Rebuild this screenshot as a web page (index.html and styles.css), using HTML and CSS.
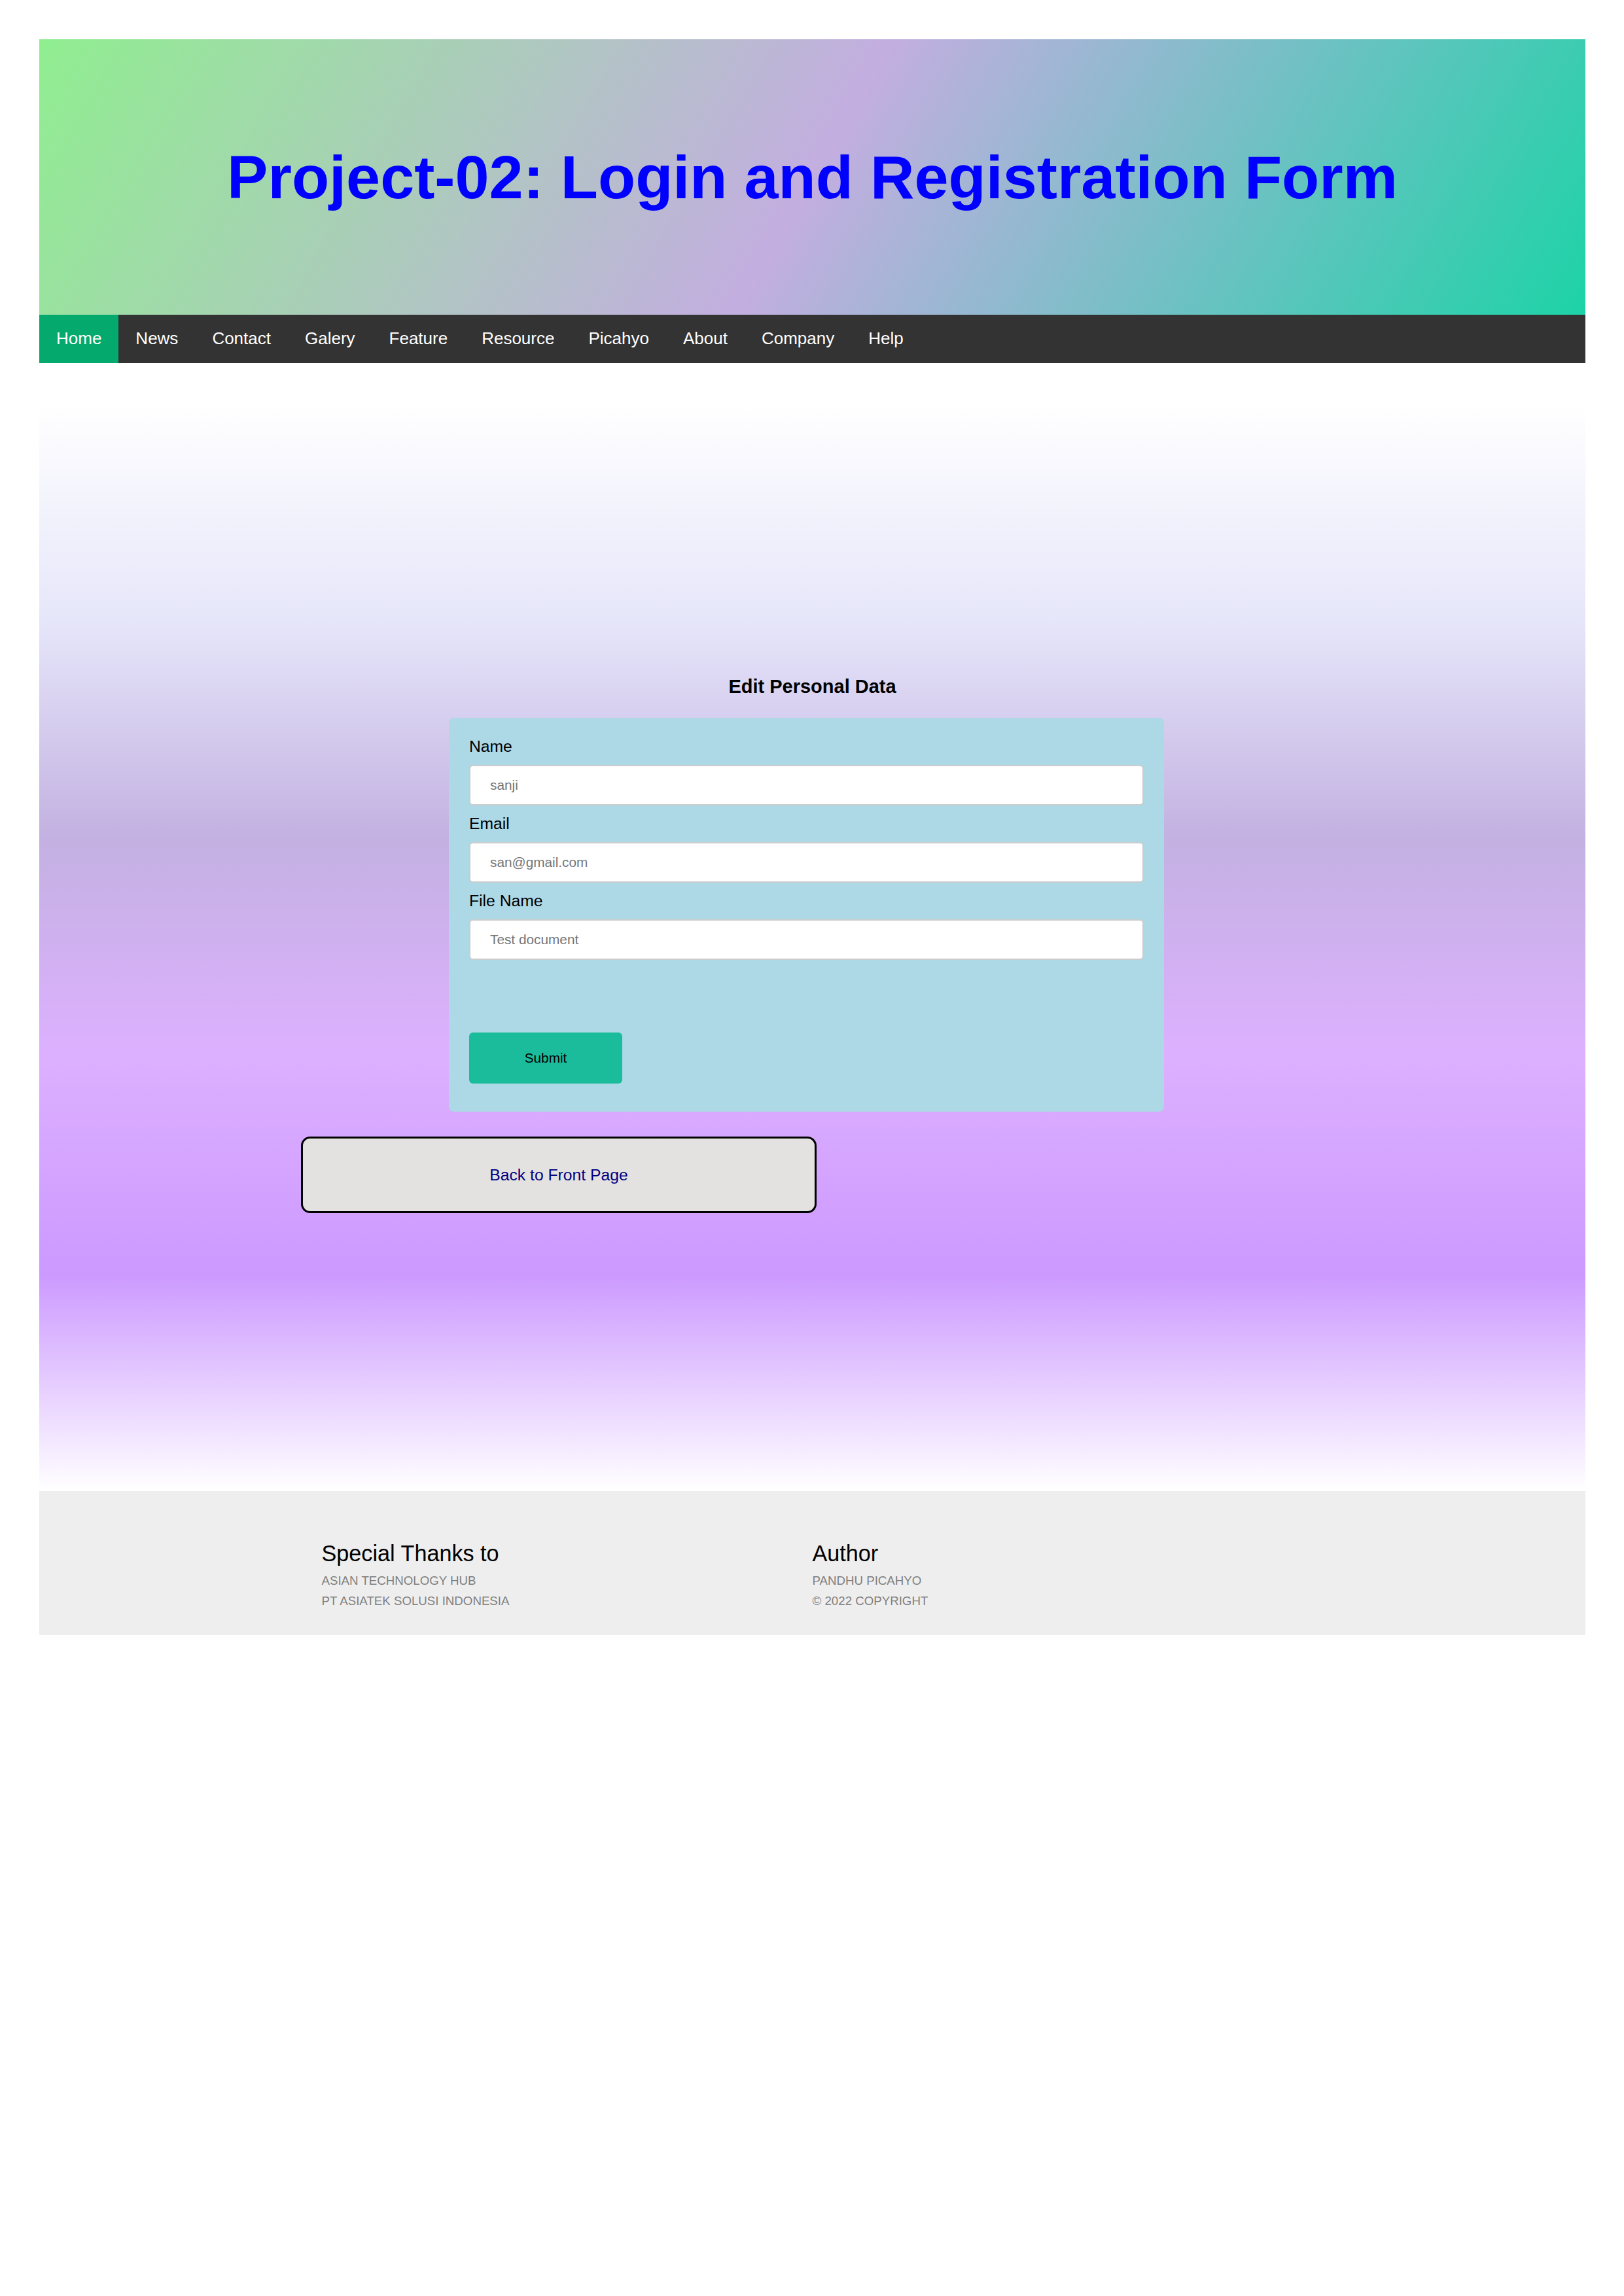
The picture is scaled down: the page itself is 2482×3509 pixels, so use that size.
FILE: index.html
```html
<!DOCTYPE html>
<html lang="en">
<head>
<meta charset="utf-8">
<title>Project-02: Login and Registration Form</title>
<link rel="stylesheet" href="styles.css">
</head>
<body>
<div class="page">
  <header class="hero">
    <h1 class="hero-title">Project-02: Login and Registration Form</h1>
  </header>
  <nav class="topnav">
    <a class="nav-link active" href="#">Home</a>
    <a class="nav-link" href="#">News</a>
    <a class="nav-link" href="#">Contact</a>
    <a class="nav-link" href="#">Galery</a>
    <a class="nav-link" href="#">Feature</a>
    <a class="nav-link" href="#">Resource</a>
    <a class="nav-link" href="#">Picahyo</a>
    <a class="nav-link" href="#">About</a>
    <a class="nav-link" href="#">Company</a>
    <a class="nav-link" href="#">Help</a>
  </nav>
  <main class="content">
    <h3 class="form-title">Edit Personal Data</h3>
    <form class="form-card">
      <label class="field-label" for="name">Name</label>
      <input class="field-input" id="name" type="text" placeholder="sanji">
      <label class="field-label" for="email">Email</label>
      <input class="field-input" id="email" type="text" placeholder="san@gmail.com">
      <label class="field-label" for="file">File Name</label>
      <input class="field-input" id="file" type="text" placeholder="Test document">
      <button class="submit-btn" type="button">Submit</button>
    </form>
    <div class="back-box">
      <a class="back-link" href="#">Back to Front Page</a>
    </div>
  </main>
  <footer class="site-footer">
    <div class="footer-inner">
      <div class="footer-col">
        <h2 class="footer-heading">Special Thanks to</h2>
        <p class="footer-line">ASIAN TECHNOLOGY HUB</p>
        <p class="footer-line">PT ASIATEK SOLUSI INDONESIA</p>
      </div>
      <div class="footer-col">
        <h2 class="footer-heading">Author</h2>
        <p class="footer-line">PANDHU PICAHYO</p>
        <p class="footer-line">&copy; 2022 COPYRIGHT</p>
      </div>
    </div>
  </footer>
</div>
</body>
</html>
```
FILE: styles.css
```css
* {
  box-sizing: border-box;
}

html, body {
  margin: 0;
  padding: 0;
  background: #ffffff;
}

body {
  font-family: "Liberation Sans", Arial, Helvetica, sans-serif;
  color: #000;
}

.page {
  margin: 60px 59px 0 60px;
}

.hero {
  height: 421px;
  display: flex;
  align-items: center;
  justify-content: center;
  background: linear-gradient(120deg, #90ee90 0%, #c3aee0 50%, #1dd3a7 100%);
}

.hero-title {
  margin: 0;
  font-size: 93.6px;
  font-weight: bold;
  color: #0000ff;
  text-align: center;
}

.topnav {
  display: flex;
  height: 74px;
  background: #333333;
}

.nav-link {
  display: block;
  padding: 0 26px;
  line-height: 72px;
  font-size: 26px;
  color: #ffffff;
  text-decoration: none;
}

.nav-link.active {
  background: #04aa6d;
}

.content {
  margin-top: 60px;
  height: 1664px;
  padding-top: 418px;
  background: linear-gradient(to bottom, #ffffff 0%, #e6e6fa 20%, #c3b1e1 40%, #ddb0ff 60%, #cc99ff 80%, #ffffff 100%);
  display: flex;
  flex-direction: column;
  align-items: flex-start;
}

.form-title {
  align-self: stretch;
  margin: 0;
  text-align: center;
  font-size: 29px;
  font-weight: bold;
  line-height: 32px;
}

.form-card {
  width: 1093px;
  margin: 32px 0 0 626px;
  padding: 30px 31px 43px;
  background: #add8e6;
  border-radius: 8px;
  display: flex;
  flex-direction: column;
  align-items: stretch;
}

.field-label {
  display: block;
  font-size: 24.7px;
  line-height: 28px;
  margin-bottom: 14px;
}

.field-input {
  display: block;
  height: 62px;
  padding: 0 30px;
  margin-bottom: 14px;
  border: 2px solid #cccccc;
  border-radius: 6px;
  background: #ffffff;
  font-family: "Liberation Sans", Arial, sans-serif;
  font-size: 20.8px;
  color: #333;
}

.field-input::placeholder {
  color: #757575;
}

.submit-btn {
  align-self: flex-start;
  width: 234px;
  height: 78px;
  margin-top: 97px;
  border: none;
  border-radius: 6px;
  background: #1abc9c;
  font-family: "Liberation Sans", Arial, sans-serif;
  font-size: 20.8px;
  color: #000;
}

.back-box {
  width: 788px;
  height: 117px;
  margin: 38px 0 0 400px;
  border: 3px solid #000000;
  border-radius: 14px;
  background: #e3e2e1;
  display: flex;
  align-items: center;
  justify-content: center;
}

.back-link {
  font-size: 24.7px;
  color: #000080;
  text-decoration: none;
}

.site-footer {
  height: 220px;
  background: #eeeeee;
  padding-top: 76px;
}

.footer-inner {
  width: 1500px;
  margin: 0 auto;
  display: grid;
  grid-template-columns: 1fr 1fr;
}

.footer-heading {
  margin: 0 0 6px;
  font-size: 34.2px;
  font-weight: normal;
  line-height: 39px;
}

.footer-line {
  margin: 0;
  font-size: 18.7px;
  line-height: 31px;
  color: #808080;
}
```
